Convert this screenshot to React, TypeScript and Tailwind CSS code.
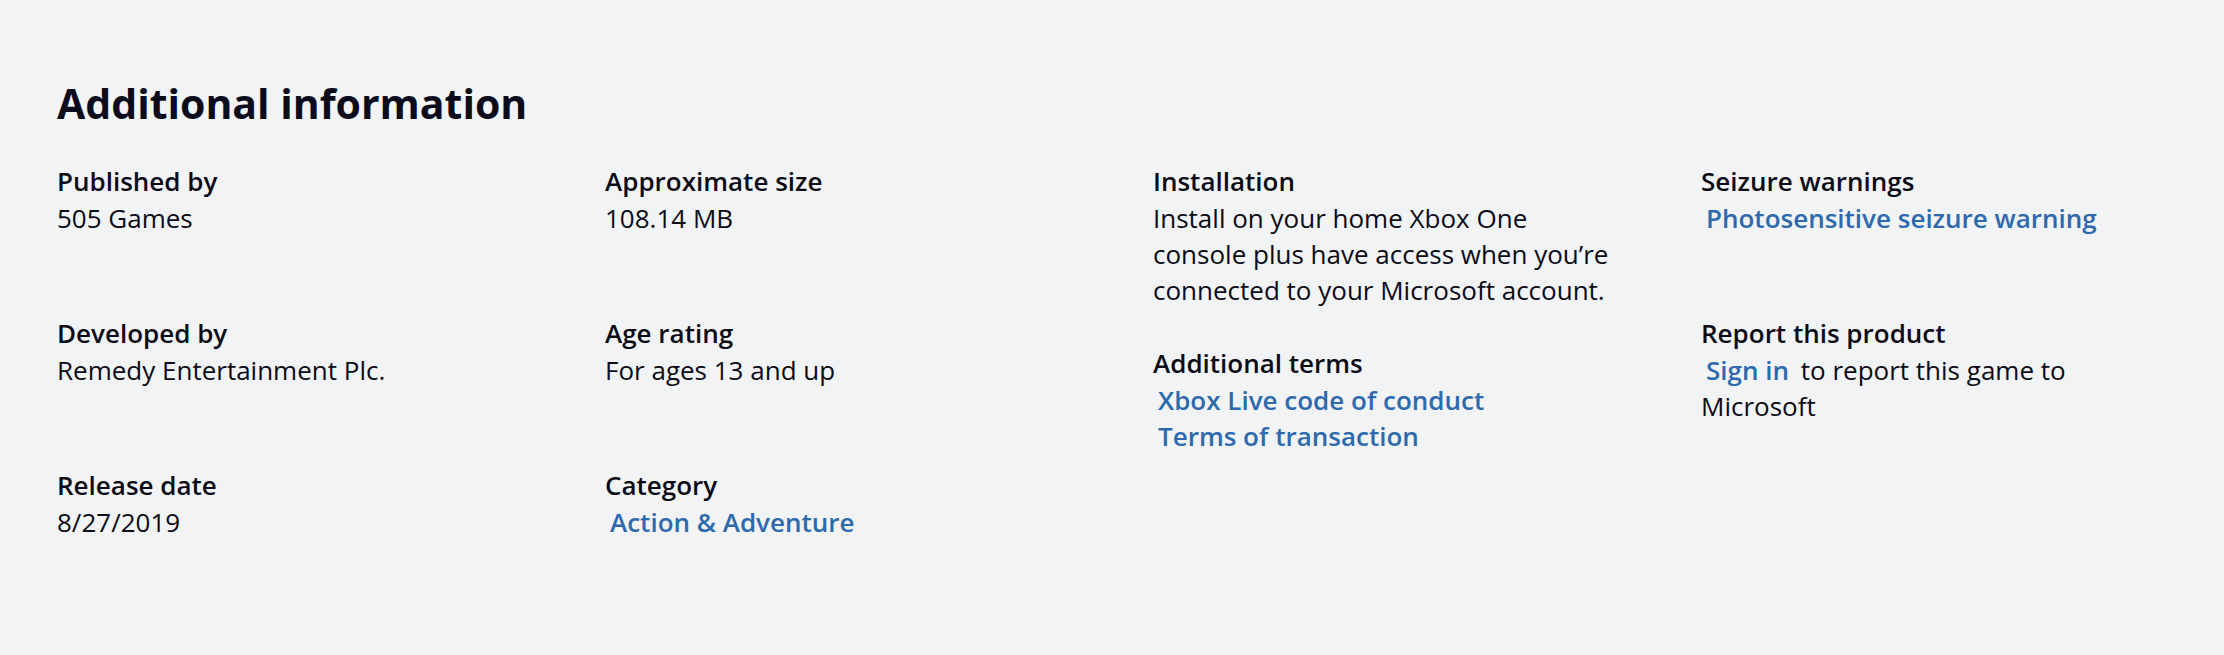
import React from 'react';

type Entry = {
    label: string;
    value?: string[];
    links?: string[];
    signIn?: boolean;
};

const columns: Entry[][] = [
    [
        { label: 'Published by', value: ['505 Games'] },
        { label: 'Developed by', value: ['Remedy Entertainment Plc.'] },
        { label: 'Release date', value: ['8/27/2019'] },
    ],
    [
        { label: 'Approximate size', value: ['108.14 MB'] },
        { label: 'Age rating', value: ['For ages 13 and up'] },
        { label: 'Category', links: ['Action & Adventure'] },
    ],
    [
        {
            label: 'Installation',
            value: [
                'Install on your home Xbox One',
                'console plus have access when you’re',
                'connected to your Microsoft account.',
            ],
        },
        { label: 'Additional terms', links: ['Xbox Live code of conduct', 'Terms of transaction'] },
    ],
    [
        { label: 'Seizure warnings', links: ['Photosensitive seizure warning'] },
        { label: 'Report this product', signIn: true },
    ],
];

const linkClass = 'inline-block px-[5px] font-semibold text-[#2d6aad] hover:underline cursor-pointer';

const InfoItem: React.FC<{ entry: Entry }> = ({ entry }) => {
    return (
        <div className="min-h-[115px] mb-[37px]">
            <h3 className="font-semibold text-[26px] leading-[37px] text-[#0b0b16]">{entry.label}</h3>

            {entry.value && entry.value.map((line) => (
                <p key={line} className="text-[26px] leading-[36px] whitespace-nowrap text-[#0b0b16]">{line}</p>
            ))}

            {entry.links && entry.links.map((link) => (
                <div key={link} className="text-[26px] leading-[36px]">
                    <a className={linkClass}>{link}</a>
                </div>
            ))}

            {entry.signIn && (
                <p className="max-w-[455px] text-[26px] leading-[36px] text-[#0b0b16]">
                    <a className={linkClass}>Sign in</a> to report this game to Microsoft
                </p>
            )}
        </div>
    );
};

const App: React.FC = () => {
    return (
        <div
            className="w-[2224px] h-[655px] overflow-hidden bg-[#f2f3f5] pl-[57px] pt-[74px]"
            style={{ fontFamily: '"Open Sans", "Noto Sans", sans-serif' }}
        >
            <h2 className="font-bold text-[41px] leading-[58px] text-[#0b0b1c]">Additional information</h2>

            <div className="grid grid-cols-[repeat(4,548px)] mt-[31px]">
                {columns.map((col, i) => (
                    <div key={i} className="flex flex-col">
                        {col.map((entry) => (
                            <InfoItem key={entry.label} entry={entry} />
                        ))}
                    </div>
                ))}
            </div>
        </div>
    );
};

export default App;
